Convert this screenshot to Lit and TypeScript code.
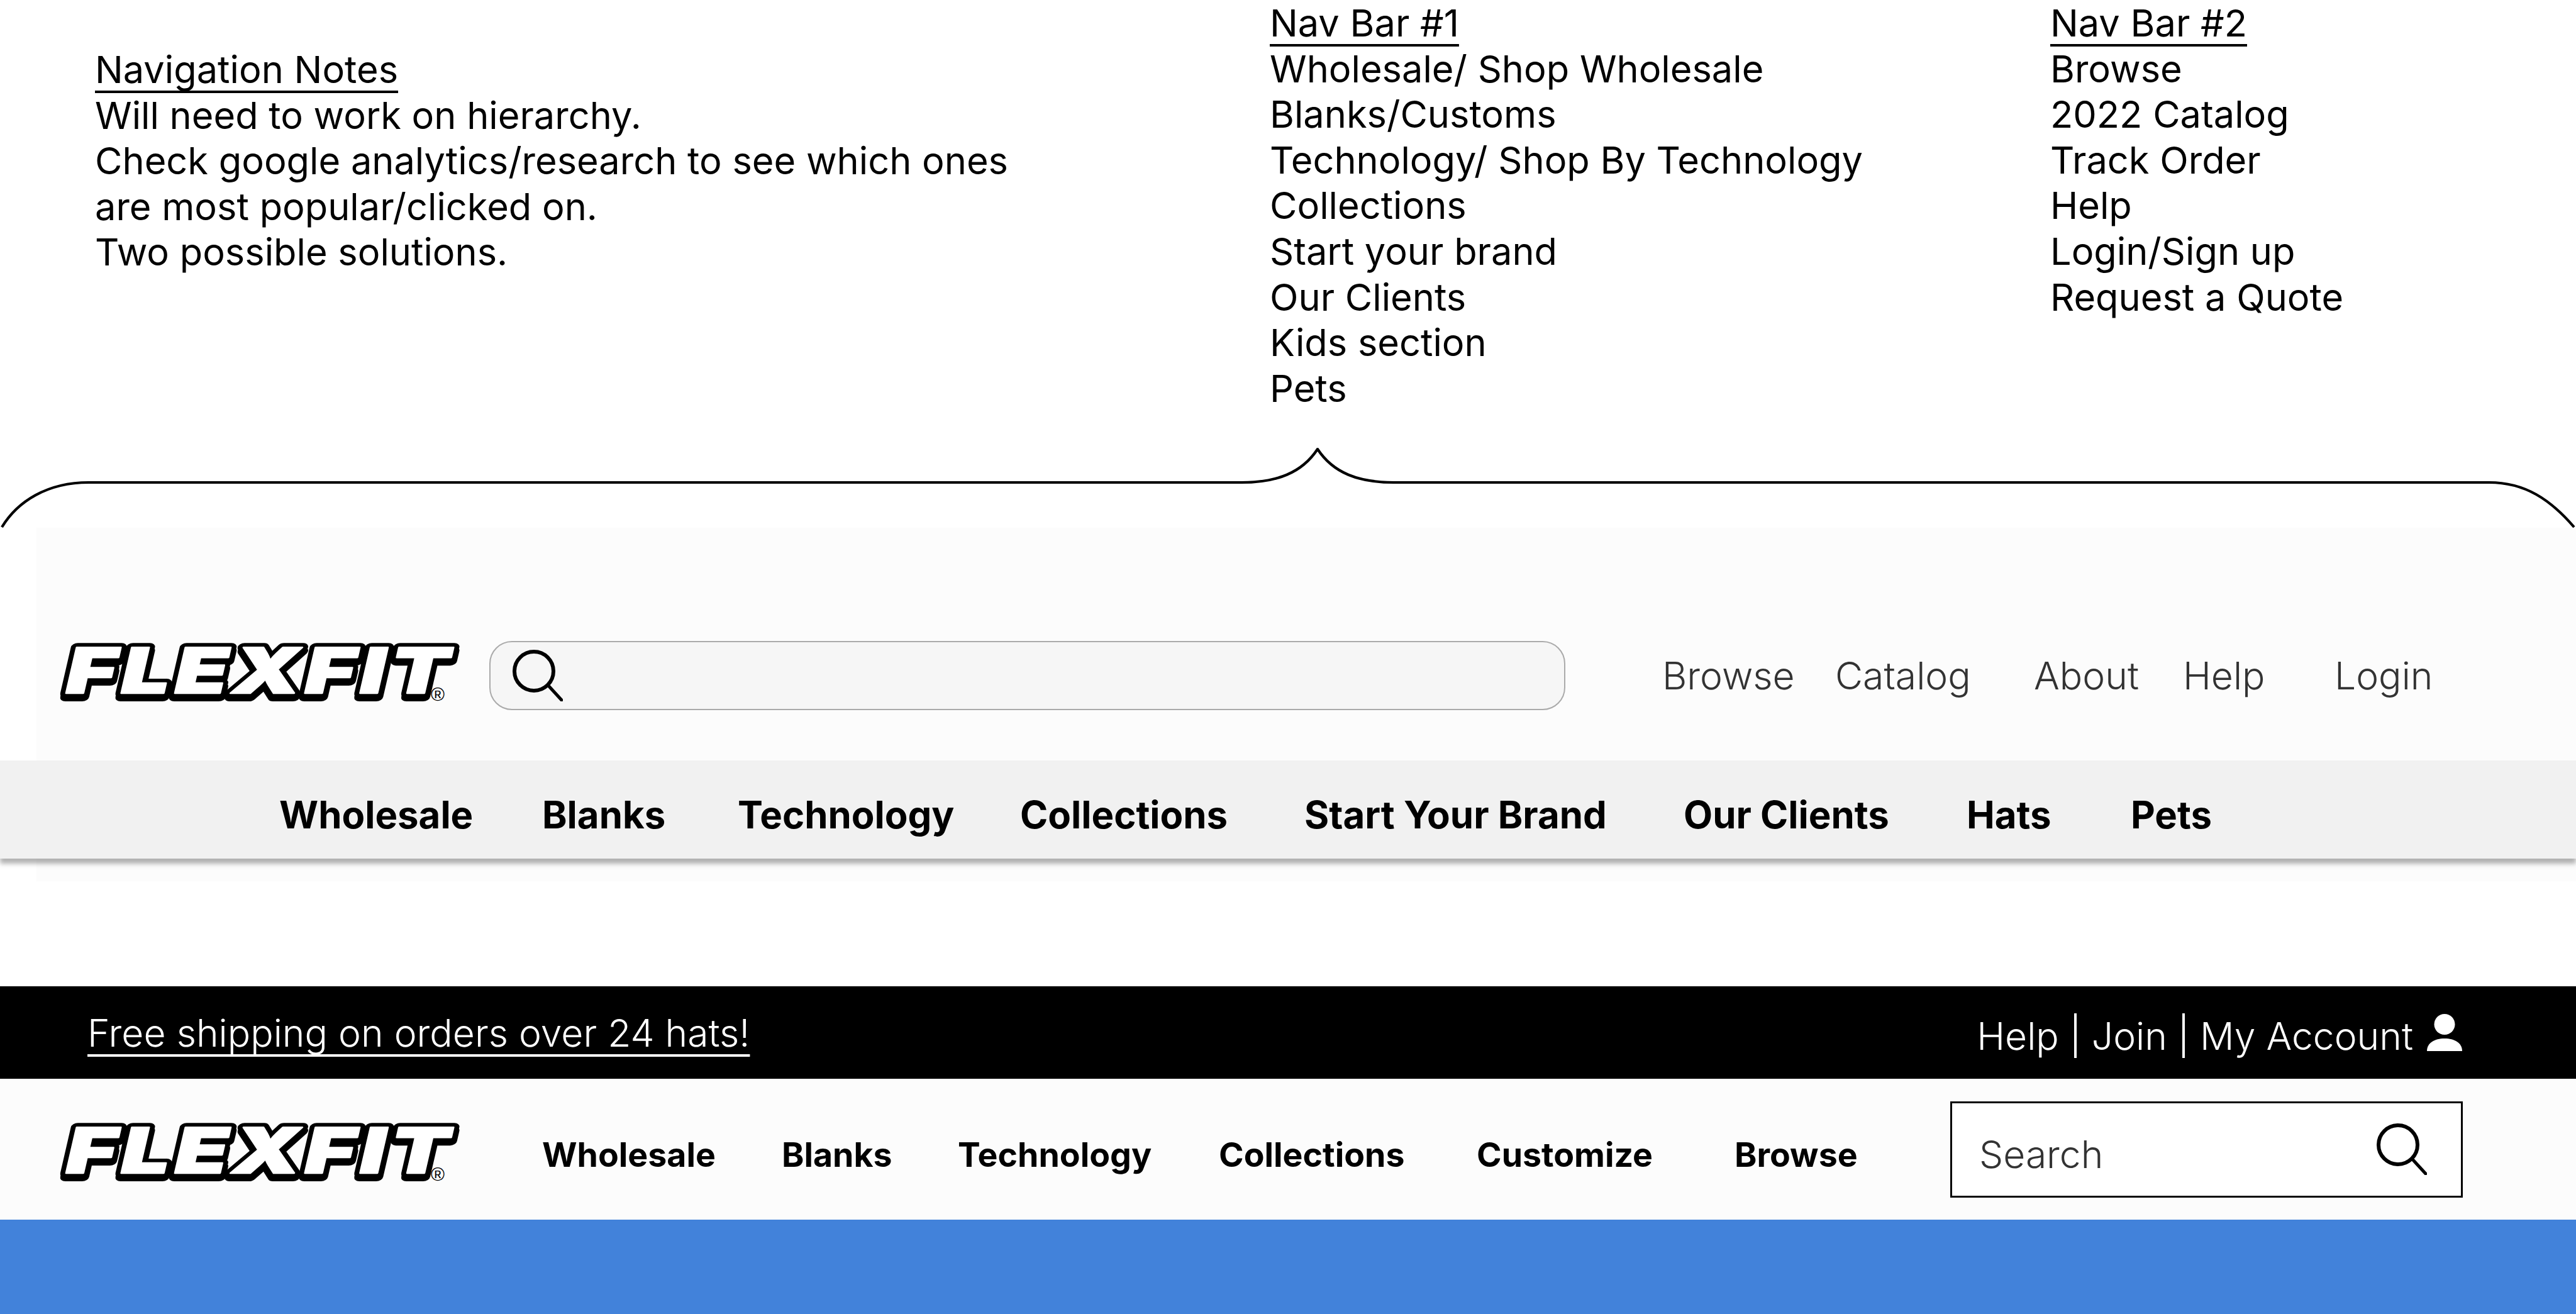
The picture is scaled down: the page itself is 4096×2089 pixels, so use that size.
import { LitElement, html, css, svg } from "lit";
import { customElement } from "lit/decorators.js";

const lensIcon = svg`<circle cx="34" cy="34" r="31" fill="none" stroke="#000" stroke-width="6"/><line x1="56" y1="56" x2="78" y2="80" stroke="#000" stroke-width="5" stroke-linecap="round"/>`;

type Slot = [string, number];

const navOne: Slot[] = [
  ["Wholesale", 444], ["Blanks", 862], ["Technology", 1173], ["Collections", 1622],
  ["Start Your Brand", 2074], ["Our Clients", 2677], ["Hats", 3127], ["Pets", 3388],
];
const navTwo: Slot[] = [
  ["Wholesale", 862], ["Blanks", 1243], ["Technology", 1523], ["Collections", 1938],
  ["Customize", 2348], ["Browse", 2758],
];
const topLinks: Slot[] = [
  ["Browse", 2643], ["Catalog", 2918], ["About", 3234], ["Help", 3471], ["Login", 3712],
];

// Each label takes a slot that runs up to the start of the next label.
function slots(items: Slot[], start: number, end: number) {
  return items.map(([label, x], i) => {
    const next = i + 1 < items.length ? items[i + 1][1] : end;
    const lead = i === 0 ? x - start : 0;
    return html`<span style="margin-left:${lead}px;width:${next - x}px;flex:none">${label}</span>`;
  });
}

@customElement("flex-logo")
class FlexLogo extends LitElement {
  static styles = css`
    :host { display: block; width: 640px; height: 96px; flex: none; }
    svg { display: block; overflow: visible; }
    .w { font-family: Inter, "Liberation Sans", sans-serif; font-weight: 900; font-size: 100px; letter-spacing: 6px; stroke-linejoin: round; }
    .r { font-family: "Liberation Sans", Arial, sans-serif; font-size: 30px; font-weight: 400; }
  `;
  render() {
    const word = (y: number, fill: string, stroke: string, width: number) => svg`
      <g transform="translate(4 ${y}) skewX(-13)">
        <text class="w" x="0" y="0" textLength="617" lengthAdjust="spacingAndGlyphs" fill=${fill} stroke=${stroke} stroke-width=${width}>FLEXFIT</text>
      </g>`;
    return html`<svg width="640" height="96" viewBox="0 0 640 96" role="img" aria-label="Flexfit">
      ${word(89, "#000", "#000", 14)}
      ${word(82.5, "#000", "#000", 14)}
      ${word(82.5, "#fff", "#fff", 2.5)}
      <text class="r" x="590" y="95" textLength="22" lengthAdjust="spacingAndGlyphs">®</text>
    </svg>`;
  }
}

@customElement("app-root")
export class AppRoot extends LitElement {
  static styles = css`
    :host { display: block; width: 4096px; height: 2089px; overflow: hidden; background: #fff; font-family: Inter, "Liberation Sans", sans-serif; color: #000; }
    .notes { height: 712px; display: grid; grid-template-columns: 1868px 1241px 1fr; padding-left: 151px; font-size: 59.5px; line-height: 72.6px; box-sizing: border-box; }
    u { text-decoration-thickness: 4px; text-underline-offset: 12px; text-decoration-skip-ink: none; }
    .col { display: flex; flex-direction: column; white-space: nowrap; }
    .col.first { padding-top: 74px; }
    .brace { display: block; width: 4096px; height: 127px; }
    .panel { margin-left: 58px; height: 370px; box-sizing: border-box; background: #fcfcfc; padding: 180px 0 0 37px; display: flex; align-items: flex-start; }
    .field { margin-left: 43px; width: 1711px; height: 110px; box-sizing: border-box; border: 2px solid #aaa; border-radius: 36px; background: #f6f6f6; display: flex; align-items: center; padding-left: 35px; }
    .field svg { width: 80px; height: 82px; }
    .links { display: flex; font-size: 60.6px; font-weight: 300; color: #333; line-height: 110px; white-space: nowrap; }
    .band { position: relative; height: 156px; background: #f1f1f1; box-shadow: 0 8px 7px rgba(0,0,0,.3); display: flex; align-items: center; font-size: 59.9px; font-weight: 700; white-space: nowrap; padding-top: 16px; box-sizing: border-box; }
    .gap { height: 203px; }
    .tint { margin-left: 58px; height: 36px; background: #fcfcfc; }
    .black { height: 147px; background: #000; color: #fff; display: flex; align-items: center; justify-content: space-between; padding: 0 181px 0 139px; font-weight: 300; font-size: 60.6px; white-space: nowrap; }
    .acct { display: flex; align-items: center; padding-top: 10px; }
    .bar { width: 4px; height: 71px; background: #fff; margin: 0 24px; }
    .person { width: 56px; height: 59px; margin-left: 22px; margin-bottom: 10px; }
    .nav2 { height: 224px; background: #fcfcfc; padding-left: 95px; display: flex; align-items: center; font-size: 53.6px; font-weight: 700; white-space: nowrap; }
    .nav2 flex-logo { margin-top: 6px; }
    .items { display: flex; padding-top: 16px; }
    .box { margin-left: auto; margin-right: 180px; width: 815px; height: 153px; box-sizing: border-box; border: 3px solid #000; background: #fff; display: flex; align-items: center; justify-content: space-between; padding: 0 54px 0 43px; font-size: 60.5px; font-weight: 300; color: #333; }
    .box span { padding-top: 16px; }
    .box svg { width: 80px; height: 82px; }
    .blue { height: 150px; background: #4282da; }
  `;
  render() {
    return html`
      <section class="notes">
        <div class="col first">
          <span><u>Navigation Notes</u></span>
          <span>Will need to work on hierarchy.</span>
          <span>Check google analytics/research to see which ones</span>
          <span>are most popular/clicked on.</span>
          <span>Two possible solutions.</span>
        </div>
        <div class="col">
          <span><u>Nav Bar #1</u></span>
          <span>Wholesale/ Shop Wholesale</span>
          <span>Blanks/Customs</span>
          <span>Technology/ Shop By Technology</span>
          <span>Collections</span>
          <span>Start your brand</span>
          <span>Our Clients</span>
          <span>Kids section</span>
          <span>Pets</span>
        </div>
        <div class="col">
          <span><u>Nav Bar #2</u></span>
          <span>Browse</span>
          <span>2022 Catalog</span>
          <span>Track Order</span>
          <span>Help</span>
          <span>Login/Sign up</span>
          <span>Request a Quote</span>
        </div>
      </section>
      <svg class="brace" viewBox="0 0 4096 127" fill="none" stroke="#000" stroke-width="4.2">
        <path d="M3 126C28 85 75 55 141 55H1974C2030 55 2070 40 2095 2C2120 40 2160 55 2216 55H3958C4015 55 4055 82 4093 126"/>
      </svg>
      <div class="panel">
        <flex-logo></flex-logo>
        <div class="field"><svg viewBox="0 0 80 82">${lensIcon}</svg></div>
        <div class="links">${slots(topLinks, 2489, 3900)}</div>
      </div>
      <div class="band">${slots(navOne, 0, 3600)}</div>
      <div class="gap"><div class="tint"></div></div>
      <div class="black">
        <u>Free shipping on orders over 24 hats!</u>
        <div class="acct">
          <span>Help</span><span class="bar"></span><span>Join</span><span class="bar"></span><span>My Account</span>
          <svg class="person" viewBox="0 0 56 59"><circle cx="28" cy="16.5" r="16.5" fill="#fff"/><path d="M0 59C0 46 12 39 28 39S56 46 56 59Z" fill="#fff"/></svg>
        </div>
      </div>
      <div class="nav2">
        <flex-logo></flex-logo>
        <div class="items">${slots(navTwo, 735, 3000)}</div>
        <div class="box"><span>Search</span><svg viewBox="0 0 80 82">${lensIcon}</svg></div>
      </div>
      <div class="blue"></div>
    `;
  }
}
